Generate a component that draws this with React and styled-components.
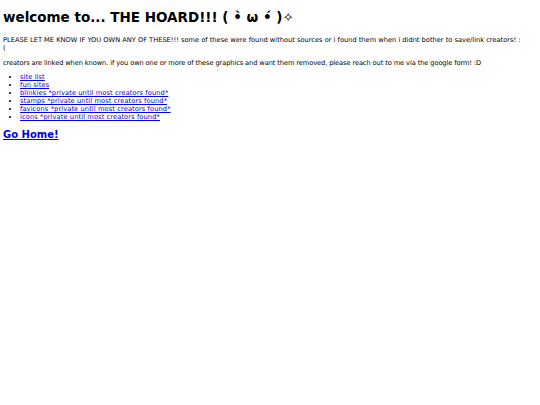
import React from "react";
import styled, { createGlobalStyle } from "styled-components";

const GlobalStyle = createGlobalStyle`
  html, body {
    margin: 0;
    background: #ffffff;
  }
  body {
    padding: 0 3px;
    font-family: "DejaVu Sans", Verdana, sans-serif;
    font-size: 6.67px;
    color: #000000;
  }
`;

const links = [
  { label: "site list", key: "site-list" },
  { label: "fun sites", key: "fun-sites" },
  { label: "blinkies *private until most creators found*", key: "blinkies" },
  { label: "stamps *private until most creators found*", key: "stamps" },
  { label: "favicons *private until most creators found*", key: "favicons" },
  { label: "icons *private until most creators found*", key: "icons" },
];

function App() {
  return (
    <Page>
      <GlobalStyle />
      <Title>welcome to... THE HOARD!!! ( •̀ ω •́ )✧</Title>
      <Text>
        PLEASE LET ME KNOW IF YOU OWN ANY OF THESE!!! some of these were found
        without sources or i found them when i didnt bother to save/link
        creators! :<br />(
      </Text>
      <Text $tracking={-0.1}>
        creators are linked when known. if you own one or more of these
        graphics and want them removed, please reach out to me via the google
        form! :D
      </Text>
      <LinkList>
        {links.map((link) => (
          <li key={link.key}>
            <Link href="#">{link.label}</Link>
          </li>
        ))}
      </LinkList>
      <HomeHeading>
        <Link href="#">Go Home!</Link>
      </HomeHeading>
    </Page>
  );
}

export default App;

const Page = styled.div`
  width: 534px;
  padding-top: 1px;
`;

const Title = styled.h1`
  font-size: 13.5px;
  font-weight: bold;
  margin: 8px 0 11px 0;
  line-height: 1.2;
`;

const Text = styled.p`
  margin: 6.5px 0;
  line-height: 8px;
  letter-spacing: ${(p) => p.$tracking || 0}px;
`;

const LinkList = styled.ul`
  margin: 6.5px 0;
  padding-left: 17px;
  line-height: 8px;
  letter-spacing: 0.1px;
  li {
    margin: 0;
  }
`;

const Link = styled.a`
  color: #0000ee;
  text-decoration: underline;
`;

const HomeHeading = styled.h2`
  font-size: 10px;
  font-weight: bold;
  margin: 8px 0;
  letter-spacing: 0;
`;
